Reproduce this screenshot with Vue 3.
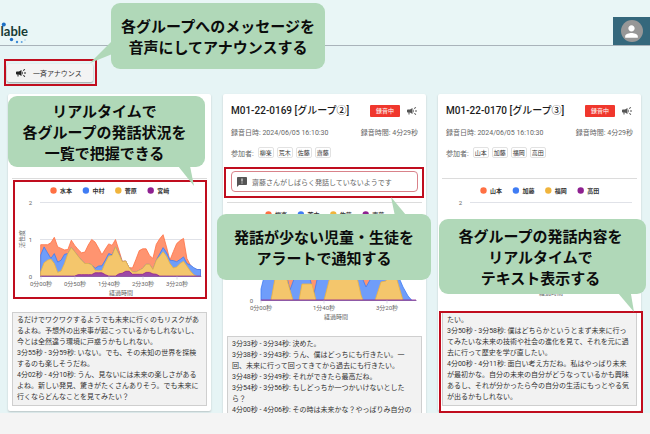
<script setup>
const colors = ['#ff7043', '#3f7cf4', '#f0b43c', '#8e2090'];
const fills = ['#ff9470', '#6f9dfa', '#f4c66c', '#9c49a6'];

const icons = {
  campaign: 'M18 11v2h4v-2h-4zm-2 6.61c.96.71 2.21 1.65 3.2 2.39.4-.53.8-1.07 1.2-1.6-.99-.74-2.24-1.68-3.2-2.4-.4.54-.8 1.08-1.2 1.61zM20.4 5.6c-.4-.53-.8-1.07-1.2-1.6-.99.74-2.24 1.68-3.2 2.4.4.53.8 1.07 1.2 1.6.96-.72 2.21-1.65 3.2-2.4zM4 9c-1.1 0-2 .9-2 2v2c0 1.1.9 2 2 2h1v4h2v-4h1l5 3V6L8 9H4zm11.5 3c0-1.33-.58-2.53-1.5-3.35v6.69c.92-.81 1.5-2.01 1.5-3.34z',
  alert: 'M20 2H4c-1.1 0-1.99.9-1.99 2L2 22l4-4h14c1.1 0 2-.9 2-2V4c0-1.1-.9-2-2-2zm-7 9h-2V5h2v6zm0 4h-2v-2h2v2z',
  person: 'M12 12c2.21 0 4-1.79 4-4s-1.79-4-4-4-4 1.79-4 4 1.79 4 4 4zm0 2c-2.67 0-8 1.34-8 4v2h16v-2c0-2.66-5.33-4-8-4z',
};

const BASE = 97.5;
const UNIT = 37;

// activity values x100, one sample every 5 seconds
const samples = [
  [86, 86, 86, 91, 106, 80, 76, 72, 73, 98, 84, 73, 64, 66, 85, 100, 93, 77, 59, 74, 88, 84, 100, 71, 41, 42, 24, 23, 46, 70, 75, 75, 57, 49, 87, 102, 113, 80, 44, 67, 89, 97, 103, 49, 31, 22, 19, 19],
  [58, 80, 64, 49, 62, 39, 44, 60, 62, 78, 67, 55, 44, 35, 35, 32, 22, 28, 29, 44, 62, 59, 80, 62, 40, 42, 24, 13, 12, 17, 22, 33, 33, 19, 44, 61, 78, 65, 44, 43, 40, 46, 53, 35, 31, 24, 19, 19],
  [13, 37, 44, 47, 35, 11, 15, 35, 62, 78, 67, 55, 44, 35, 35, 32, 17, 16, 16, 37, 55, 57, 80, 60, 40, 42, 24, 13, 12, 17, 22, 33, 33, 19, 44, 55, 67, 55, 35, 23, 26, 35, 41, 28, 15, 5, 0, 0],
  [1, 1, 1, 1, 1, 1, 1, 1, 1, 1, 1, 5, 5, 5, 5, 5, 10, 10, 10, 5, 1, 1, 1, 7, 9, 14, 14, 6, 6, 6, 6, 11, 11, 7, 6, 1, 1, 1, 1, 1, 1, 1, 1, 1, 1, 1, 1, 1],
];

const toPoints = (values) => {
  const top = values.map((v, i) => `${(28.7 + i * 3.4).toFixed(1)},${(BASE - (v / 100) * UNIT).toFixed(1)}`);
  return `28.7,${BASE} ${top.join(' ')} 188.5,${BASE}`;
};

const groups = [
  {
    id: 'M01-22-0168',
    name: 'グループ①',
    members: ['水本', '中村', '菅原', '宮﨑'],
    frame: 'chart',
    start: 28,
    ticks: [
      { x: 29, label: '0分00秒' },
      { x: 63, label: '0分50秒' },
      { x: 97, label: '1分40秒' },
      { x: 131, label: '2分30秒' },
      { x: 165, label: '3分20秒' },
    ],
    areas: samples.map(toPoints),
    log: [
      'るだけでワクワクするようでも未来に行くのもリスクがあ',
      'るよね。予想外の出来事が起こっているかもしれないし、',
      '今とは全然違う環境に戸惑うかもしれない。',
      '3分55秒 - 3分59秒: いない。でも、その未知の世界を探検',
      'するのも楽しそうだね。',
      '4分02秒 - 4分10秒: うん、見ないには未来の楽しさがある',
      'よね。新しい発見、驚きがたくさんありそう。でも未来に',
      '行くならどんなことを見てみたい？',
    ],
  },
  {
    id: 'M01-22-0169',
    name: 'グループ②',
    members: ['柳楽', '荒木', '佐藤', '齋藤'],
    alert: '齋藤さんがしばらく発話していないようです',
    start: 34,
    ticks: [
      { x: 34, label: '0分00秒' },
      { x: 97, label: '1分40秒' },
      { x: 160, label: '3分20秒' },
    ],
    areas: [
      '38,97.5 38,70 170,70 175,97.5',
      '34,97.5 34,86 38,70 59,70 63,87 67,76 83,76 87,91 91,72 112,72 115,79 118,72 134,72 139,84 143,77 150,70 170,70 176,84 181,93 185,97.5',
      '44,97.5 49,70 58,70 66,97.5 72,97.5 75,81 85,81 89,97.5 97,97.5 104,70 129,70 134,92 136,97.5 148,97.5 154,79 159,78 161,70 168,70 176,97.5',
      '34,97.5 34,97 189,97 189,97.5',
    ],
    log: [
      '3分33秒 - 3分34秒: 決めた。',
      '3分38秒 - 3分43秒: うん、僕はどっちにも行きたい。一',
      '回、未来に行って回ってきてから過去にも行きたい。',
      '3分48秒 - 3分49秒: それができたら最高だね。',
      '3分54秒 - 3分56秒: もしどっちか一つかいけないとした',
      'ら？',
      '4分00秒 - 4分06秒: その時は未来かな？やっぱりみ自分の',
    ],
  },
  {
    id: 'M01-22-0170',
    name: 'グループ③',
    members: ['山本', '加藤', '福岡', '高田'],
    frame: 'log',
    start: 28,
    ticks: [],
    areas: [],
    log: [
      'たい。',
      '3分50秒 - 3分58秒: 僕はどちらかというとまず未来に行っ',
      'てみたいな未来の技術や社会の進化を見て、それを元に過',
      '去に行って歴史を学び直したい。',
      '4分00秒 - 4分11秒: 面白い考え方だね。私はやっぱり未来',
      'が最初かな。自分の未来の自分がどうなっているかも興味',
      'あるし、それが分かったら今の自分の生活にもっとやる気',
      'が出るかもしれない。',
    ],
  },
];

const callouts = [
  { key: 'to-announce', lines: ['各グループへのメッセージを', '音声にしてアナウンスする'] },
  { key: 'to-chart', lines: ['リアルタイムで', '各グループの発話状況を', '一覧で把握できる'] },
  { key: 'to-alert', lines: ['発話が少ない児童・生徒を', 'アラートで通知する'] },
  { key: 'to-log', lines: ['各グループの発話内容を', 'リアルタイムで', 'テキスト表示する'] },
];
</script>

<template>
  <div class="page">
    <div class="content">
      <header class="header">
        <div class="logo">
          <span>lable</span>
          <svg class="logo-dots" viewBox="0 0 30 28" aria-hidden="true">
            <circle cx="3.8" cy="7.5" r="2" fill="#1d6fc4" />
            <circle cx="11.5" cy="22.5" r="1.7" fill="#1d6fc4" />
            <circle cx="17" cy="25" r="1.2" fill="#3f8bd6" />
            <circle cx="21.7" cy="25" r="1" fill="#5fa3de" />
            <circle cx="25" cy="23" r="0.7" fill="#8cc0e8" />
          </svg>
        </div>
        <div class="account">
          <button class="avatar" aria-label="アカウント">
            <svg viewBox="0 0 24 24"><path :d="icons.person" /></svg>
          </button>
        </div>
      </header>

      <div class="toolbar">
        <button class="announce">
          <svg viewBox="0 0 24 24"><path :d="icons.campaign" /></svg>
          一斉アナウンス
          <span class="frame"></span>
        </button>
      </div>

      <main class="cards">
        <section v-for="group in groups" :key="group.id" class="card">
          <div class="head">
            <div class="title-row">
              <h2>{{ group.id }} [{{ group.name }}]</h2>
              <span class="badge">録音中</span>
              <button class="icon-button" aria-label="アナウンス">
                <svg viewBox="0 0 24 24"><path :d="icons.campaign" /></svg>
              </button>
            </div>
            <div class="meta">
              <span>録音日時: 2024/06/05 16:10:30</span>
              <span>録音時間: 4分29秒</span>
            </div>
            <div class="members">
              <span class="members-label">参加者:</span>
              <span v-for="member in group.members" :key="member" class="chip">{{ member }}</span>
            </div>
            <div v-if="group.alert" class="alert">
              <svg viewBox="0 0 24 24"><path :d="icons.alert" /></svg>
              {{ group.alert }}
              <span class="frame"></span>
            </div>
          </div>

          <div class="chart">
            <svg viewBox="0 0 195 120">
              <g v-for="(member, i) in group.members" :key="member">
                <circle :cx="41.5 + i * 32.4" cy="11.5" r="3.2" :fill="colors[i]" />
                <text :x="48 + i * 32.4" y="14" class="legend">{{ member }}</text>
              </g>
              <g v-for="value in [2, 1, 0]" :key="value">
                <line :x1="group.start" x2="190" :y1="BASE - value * UNIT" :y2="BASE - value * UNIT" stroke="#e0e2e8" />
                <text :x="group.start - 8" :y="BASE - value * UNIT + 2" text-anchor="end">{{ value }}</text>
              </g>
              <text x="0" y="0" transform="translate(12 60) rotate(-90)" text-anchor="middle">活性度</text>
              <polygon
                v-for="(points, i) in group.areas"
                :key="i"
                :points="points"
                :fill="fills[i]"
                :stroke="colors[i]"
                class="area"
              />
              <line :x1="group.start" x2="189" :y1="BASE" :y2="BASE" stroke="#8d6fb0" stroke-width="0.7" />
              <g v-for="tick in group.ticks" :key="tick.x">
                <line :x1="tick.x" :x2="tick.x" :y1="BASE" :y2="BASE + 3" stroke="#ccd" stroke-width="0.7" />
                <text :x="tick.x" y="107" text-anchor="middle">{{ tick.label }}</text>
              </g>
              <text x="109" y="116" text-anchor="middle">経過時間</text>
            </svg>
            <span v-if="group.frame === 'chart'" class="frame"></span>
          </div>

          <div class="log">
            <p v-for="line in group.log" :key="line">{{ line }}</p>
            <span v-if="group.frame === 'log'" class="frame"></span>
          </div>
        </section>
      </main>
    </div>
    <div class="bottom"></div>

    <div v-for="callout in callouts" :key="callout.key" class="callout" :class="callout.key">
      <p v-for="line in callout.lines" :key="line">{{ line }}</p>
    </div>
  </div>
</template>

<style>
body {
  margin: 0;
}
</style>

<style scoped>
.page {
  position: relative;
  display: flex;
  flex-direction: column;
  height: 100vh;
  overflow: hidden;
  font-family: Roboto, "Noto Sans CJK JP", sans-serif;
  font-size: 7px;
  color: #333;
}

p,
h2 {
  margin: 0;
}

button {
  padding: 0;
  border: 0;
  background: none;
  font: inherit;
  color: inherit;
}

.content {
  flex: 1;
  min-height: 0;
  overflow: hidden;
  background: #e6f4f5;
}

.bottom {
  flex: none;
  height: 21px;
  background: #f4f4f4;
}

.header {
  display: flex;
  justify-content: space-between;
  height: 28px;
  padding-top: 17px;
  border-bottom: 1px solid #a9b3ba;
  background: #e9f6f6;
}

.logo {
  position: relative;
  display: flex;
  justify-content: flex-end;
  align-items: center;
  width: 28px;
  font-family: Lato, sans-serif;
  font-size: 13px;
  font-weight: 700;
  color: #173b33;
}

.logo-dots {
  position: absolute;
  top: 0;
  left: 0;
  width: 30px;
  height: 28px;
}

.account {
  display: flex;
  align-items: center;
  justify-content: center;
  width: 37px;
  background: #35687c;
}

.avatar {
  display: flex;
  align-items: center;
  justify-content: center;
  width: 22px;
  height: 22px;
  border-radius: 50%;
  background: #979797;
}

.avatar svg {
  width: 19px;
  height: 19px;
  fill: #fff;
}

.toolbar {
  display: flex;
  padding: 18px 7px 12px;
}

.announce {
  position: relative;
  display: flex;
  align-items: center;
  gap: 6px;
  height: 18px;
  padding: 0 11px 0 8px;
  border-radius: 2px;
  background: #f3f3f3;
  box-shadow: 0 1px 2px rgba(0, 0, 0, 0.35);
}

.announce svg,
.icon-button svg,
.alert svg {
  display: block;
  flex: none;
  width: 12px;
  height: 12px;
  fill: #222;
}

.frame {
  position: absolute;
  z-index: 1;
  border: 2px solid #c00d1e;
  pointer-events: none;
}

.announce .frame {
  inset: -5px -4px -4px -3px;
}

.cards {
  display: grid;
  grid-template-columns: repeat(3, minmax(0, 1fr));
  gap: 12px;
  align-items: start;
  padding: 0 9px 2px 8px;
}

.card {
  padding: 0 4px 5px;
  border-radius: 2px;
  background: #fff;
  box-shadow: 0 1px 2px rgba(0, 0, 0, 0.2);
}

.head {
  padding: 10px 4px;
  border-bottom: 1px solid #dcdcdc;
}

.title-row {
  display: flex;
  align-items: center;
  gap: 6px;
  height: 14px;
}

h2 {
  flex: 1;
  font-size: 10px;
  line-height: 14px;
  font-weight: 500;
  color: #1c1c1c;
  white-space: nowrap;
}

.badge {
  width: 30px;
  border-radius: 1px;
  background: #f0372d;
  color: #fff;
  font-size: 6px;
  line-height: 12px;
  text-align: center;
}

.icon-button svg {
  fill: #555;
}

.meta {
  display: flex;
  justify-content: space-between;
  margin-top: 10px;
  line-height: 10px;
  color: #666;
}

.members {
  display: flex;
  align-items: center;
  gap: 3px;
  height: 11px;
  margin: 9px 0 10px;
}

.members-label {
  margin-right: 1px;
  color: #666;
}

.chip {
  padding: 0 1px;
  border: 1px solid #e2e2e2;
  border-radius: 2px;
  font-size: 6px;
  line-height: 9px;
}

.alert {
  position: relative;
  display: flex;
  align-items: center;
  gap: 4px;
  height: 19px;
  margin-top: 13px;
  padding-left: 4px;
  border: 1px solid #d9828a;
  border-radius: 4px;
  color: #666;
}

.alert svg {
  fill: #555;
}

.alert .frame {
  inset: -5px -7px -7px -8px;
}

.chart {
  position: relative;
}

.chart svg {
  display: block;
  width: 100%;
}

.chart text {
  font-size: 6px;
  fill: #666;
}

.chart .legend {
  font-weight: 700;
  fill: #333;
}

.area {
  stroke-width: 0.8;
  stroke-linejoin: round;
}

.chart .frame {
  inset: 1px 0 0 1px;
}

.log {
  position: relative;
  margin-top: 13px;
  padding: 2px 4px;
  border: 1px solid #cfcfcf;
  background: #f2f2f2;
  line-height: 11px;
  white-space: nowrap;
}

.log .frame {
  inset: -2px -7px -8px -4px;
}

.callout {
  position: absolute;
  z-index: 2;
  box-sizing: border-box;
  padding: 12px 0;
  border-radius: 9px;
  background: #b0d8b8;
  color: #0c0c0c;
  font-family: "Noto Sans CJK JP", sans-serif;
  font-size: 15px;
  font-weight: 700;
  line-height: 21px;
  text-align: center;
  white-space: nowrap;
}

.callout::after {
  content: "";
  position: absolute;
  background: #b0d8b8;
}

.to-announce {
  top: 3px;
  left: 111px;
  width: 214px;
}

.to-announce::after {
  top: 37px;
  left: -21px;
  width: 23px;
  height: 23px;
  clip-path: polygon(0 100%, 100% 0, 100% 60%);
}

.to-chart {
  top: 96px;
  left: 8px;
  width: 197px;
  padding: 4px 4px 4px 0;
}

.to-chart::after {
  top: 70px;
  left: 170px;
  width: 16px;
  height: 20px;
  clip-path: polygon(0 0, 75% 0, 100% 100%);
}

.to-alert {
  top: 214px;
  left: 217px;
  width: 214px;
}

.to-alert::after {
  top: -17px;
  left: 174px;
  width: 15px;
  height: 18px;
  clip-path: polygon(0 0, 100% 100%, 25% 100%);
}

.to-log {
  top: 219px;
  left: 439px;
  width: 207px;
  padding: 6px 4px 6px 0;
}

.to-log::after {
  top: 74px;
  left: 179px;
  width: 16px;
  height: 19px;
  clip-path: polygon(0 0, 80% 0, 100% 100%);
}
</style>
